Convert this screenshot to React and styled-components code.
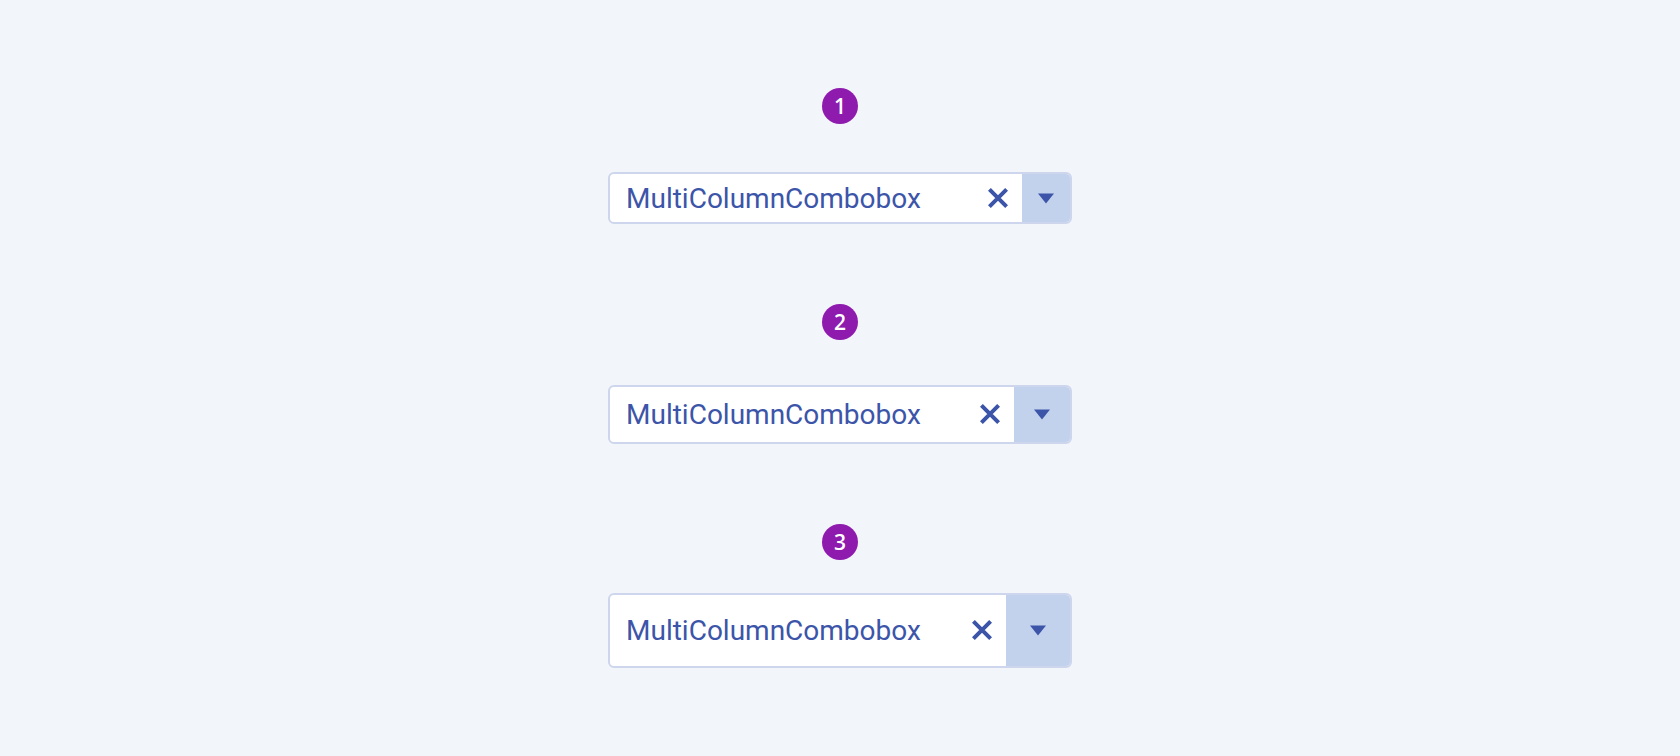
import React from "react";
import styled, { createGlobalStyle } from "styled-components";

const Global = createGlobalStyle`
  html, body { margin: 0; padding: 0; background: #f2f5fa; }
  body { font-family: Roboto, "Liberation Sans", sans-serif; }
`;

const Page = styled.div`
  min-height: 756px;
  box-sizing: border-box;
  padding-top: 70px;
  display: flex;
  flex-direction: column;
  align-items: center;
  background: #f2f5fa;
`;

const Section = styled.section`
  height: 216px;
  display: flex;
  flex-direction: column;
  align-items: center;
`;

const Badge = styled.div`
  margin-top: ${(p) => p.$top}px;
  width: 36px;
  height: 36px;
  border-radius: 50%;
  background: #8e1aae;
  color: #fff;
  font-family: "Open Sans", "Noto Sans", sans-serif;
  font-size: 21px;
  font-weight: 600;
  display: flex;
  align-items: center;
  justify-content: center;
  line-height: 1;
`;

const ComboArea = styled.div`
  height: ${(p) => p.$h}px;
  display: flex;
  align-items: center;
`;

const Combo = styled.div`
  width: 464px;
  height: ${(p) => p.$h}px;
  box-sizing: border-box;
  border: 2px solid #cdd6ec;
  border-radius: 6px;
  background: #fff;
  display: flex;
  align-items: stretch;
  overflow: hidden;
`;

const Value = styled.span`
  flex: 1;
  display: flex;
  align-items: center;
  padding-left: 16px;
  font-family: Roboto, "Liberation Sans", sans-serif;
  font-size: 28px;
  color: #3c55a9;
  white-space: nowrap;
`;

const Clear = styled.span`
  display: flex;
  align-items: center;
  padding-right: 14px;
  color: #3c55a9;
`;

const DropButton = styled.span`
  width: ${(p) => p.$w}px;
  flex: none;
  background: #c3d2ec;
  display: flex;
  align-items: center;
  justify-content: center;
  color: #3c55a9;
`;

const XIcon = () => (
  <svg width="20" height="20" viewBox="0 0 20 20">
    <path d="M1.4 1.4 L18.6 18.6 M18.6 1.4 L1.4 18.6" stroke="currentColor" strokeWidth="4" fill="none" />
  </svg>
);

const Caret = () => (
  <svg width="16" height="11" viewBox="0 0 16 11">
    <path d="M0 0.5 H16 L8 10.5 Z" fill="currentColor" />
  </svg>
);

const items = [
  { n: 1, top: 18, area: 148, h: 52, w: 48 },
  { n: 2, top: 18, area: 148, h: 59, w: 56 },
  { n: 3, top: 22, area: 140, h: 75, w: 64 },
];

export default function App() {
  return (
    <>
      <Global />
      <Page>
        {items.map((it) => (
          <Section key={it.n}>
            <Badge $top={it.top}>{it.n}</Badge>
            <ComboArea $h={it.area}>
              <Combo $h={it.h}>
                <Value>MultiColumnCombobox</Value>
                <Clear>
                  <XIcon />
                </Clear>
                <DropButton $w={it.w}>
                  <Caret />
                </DropButton>
              </Combo>
            </ComboArea>
          </Section>
        ))}
      </Page>
    </>
  );
}
